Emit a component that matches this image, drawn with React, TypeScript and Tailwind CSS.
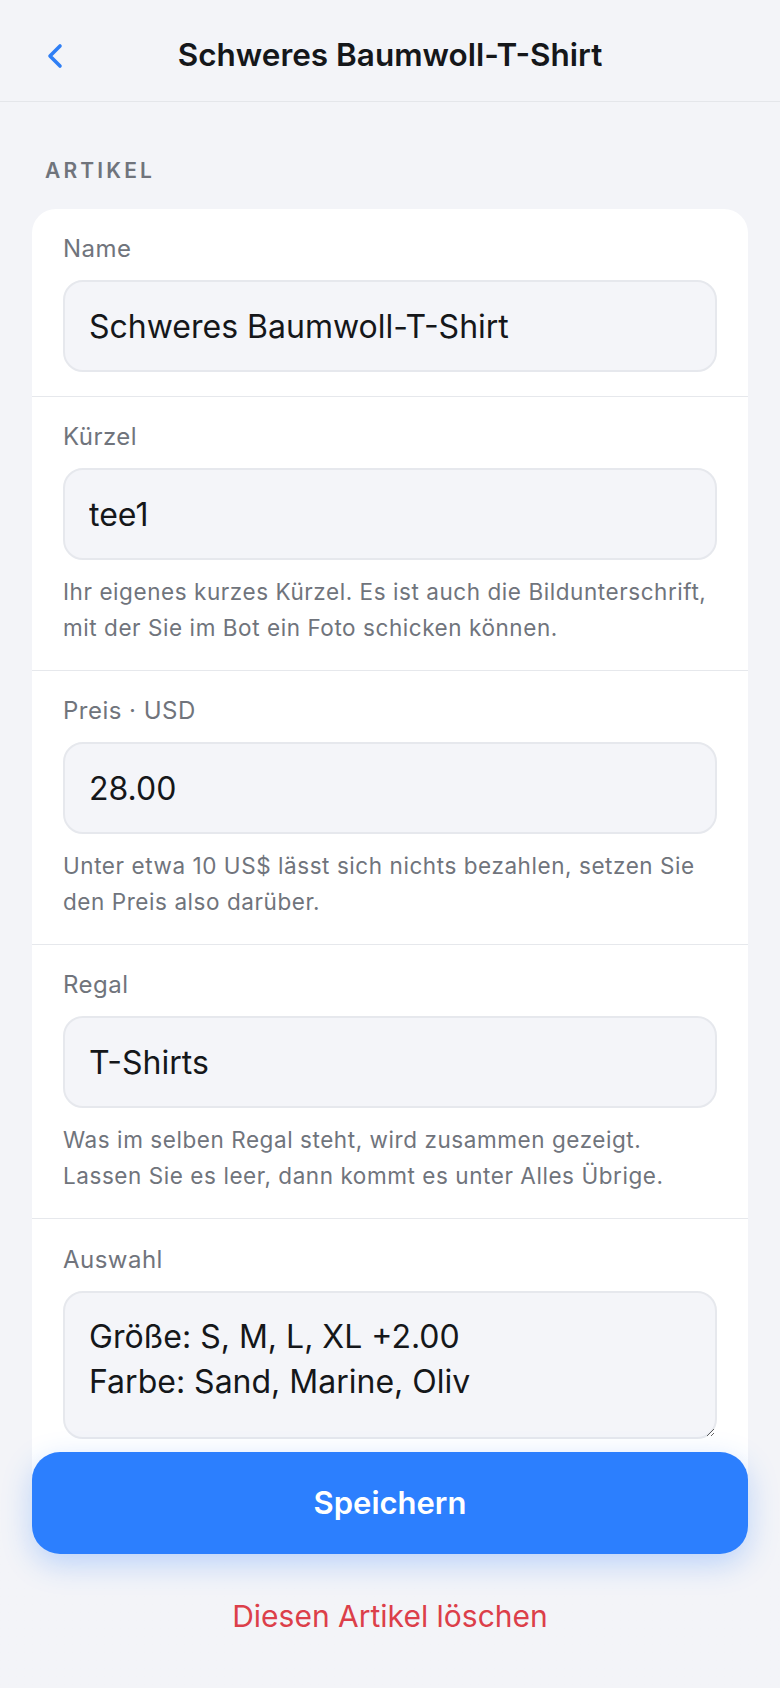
import React from "react";

const FONT = { fontFamily: "Inter, 'Noto Sans', 'Liberation Sans', sans-serif" };

type Field = {
  label: string;
  value: string;
  hint?: string[];
};

const fields: Field[] = [
  { label: "Name", value: "Schweres Baumwoll-T-Shirt" },
  {
    label: "Kürzel",
    value: "tee1",
    hint: [
      "Ihr eigenes kurzes Kürzel. Es ist auch die Bildunterschrift,",
      "mit der Sie im Bot ein Foto schicken können.",
    ],
  },
  {
    label: "Preis · USD",
    value: "28.00",
    hint: [
      "Unter etwa 10 US$ lässt sich nichts bezahlen, setzen Sie",
      "den Preis also darüber.",
    ],
  },
  {
    label: "Regal",
    value: "T-Shirts",
    hint: [
      "Was im selben Regal steht, wird zusammen gezeigt.",
      "Lassen Sie es leer, dann kommt es unter Alles Übrige.",
    ],
  },
];

function FieldRow({ field }: { field: Field }) {
  return (
    <div className="border-b border-[#e6e8ec] px-[31px] pt-[24px] pb-[24px]">
      <div className="text-[24px] leading-[32px] tracking-[0.02em] text-[#70747c]">{field.label}</div>
      <input
        readOnly
        defaultValue={field.value}
        className="mt-[15px] block h-[92px] w-full rounded-[20px] border-2 border-[#e6e8ed] bg-[#f4f5f9] px-[24px] text-[32px] text-[#15171a] outline-none"
      />
      {field.hint && (
        <div className="mt-[14px] text-[22.5px] leading-[36px] tracking-[0.025em] text-[#70747c]">
          {field.hint.map((line) => (
            <div key={line} className="whitespace-nowrap">{line}</div>
          ))}
        </div>
      )}
    </div>
  );
}

export default function App() {
  return (
    <div className="relative h-[1688px] overflow-hidden bg-[#f3f4f8]" style={FONT}>
      {/* header */}
      <div className="relative flex h-[102px] items-center justify-center border-b border-[#e4e6ea]">
        <button className="absolute left-[44px] top-[42px] flex h-[28px] w-[22px] items-center justify-center">
          <svg width="18" height="26" viewBox="0 0 18 26" fill="none">
            <path
              d="M14 3 L4 13 L14 23"
              stroke="#2f7ff5"
              strokeWidth="3.6"
              strokeLinecap="round"
              strokeLinejoin="round"
            />
          </svg>
        </button>
        <h1 className="mt-[8px] text-[31.5px] font-semibold text-[#15171a]">
          Schweres Baumwoll-T-Shirt
        </h1>
      </div>

      <div className="px-[32px]">
        <div className="mt-[55px] px-[13px] text-[21px] font-semibold leading-[28px] tracking-[0.15em] text-[#70747c]">
          ARTIKEL
        </div>

        <div className="mt-[24px] overflow-hidden rounded-[24px] bg-white">
          {fields.map((f) => (
            <FieldRow key={f.label} field={f} />
          ))}
          <div className="px-[31px] pt-[25px] pb-[40px]">
            <div className="text-[24px] leading-[32px] tracking-[0.02em] text-[#70747c]">Auswahl</div>
            <textarea
              readOnly
              defaultValue={"Größe: S, M, L, XL +2.00\nFarbe: Sand, Marine, Oliv"}
              className="mt-[15px] block h-[148px] w-full resize-y rounded-[20px] border-2 border-[#e6e8ed] bg-[#f4f5f9] px-[24px] pt-[21px] text-[32px] leading-[45px] text-[#15171a] outline-none"
            />
          </div>
          <div className="h-[200px]" />
        </div>
      </div>

      {/* sticky footer */}
      <div className="absolute bottom-0 left-0 right-0 bg-gradient-to-b from-transparent via-[#f3f4f8] via-40% to-[#f3f4f8] px-[32px] pb-[52px]">
        <button className="flex h-[102px] w-full items-center justify-center rounded-[28px] bg-[#2c7ffe] text-[31px] font-semibold text-white shadow-[0_10px_30px_rgba(44,127,254,0.28)]">
          Speichern
        </button>
        <div className="mt-[42px] text-center text-[30px] leading-[40px] text-[#dc3f4a]">
          Diesen Artikel löschen
        </div>
      </div>
    </div>
  );
}
